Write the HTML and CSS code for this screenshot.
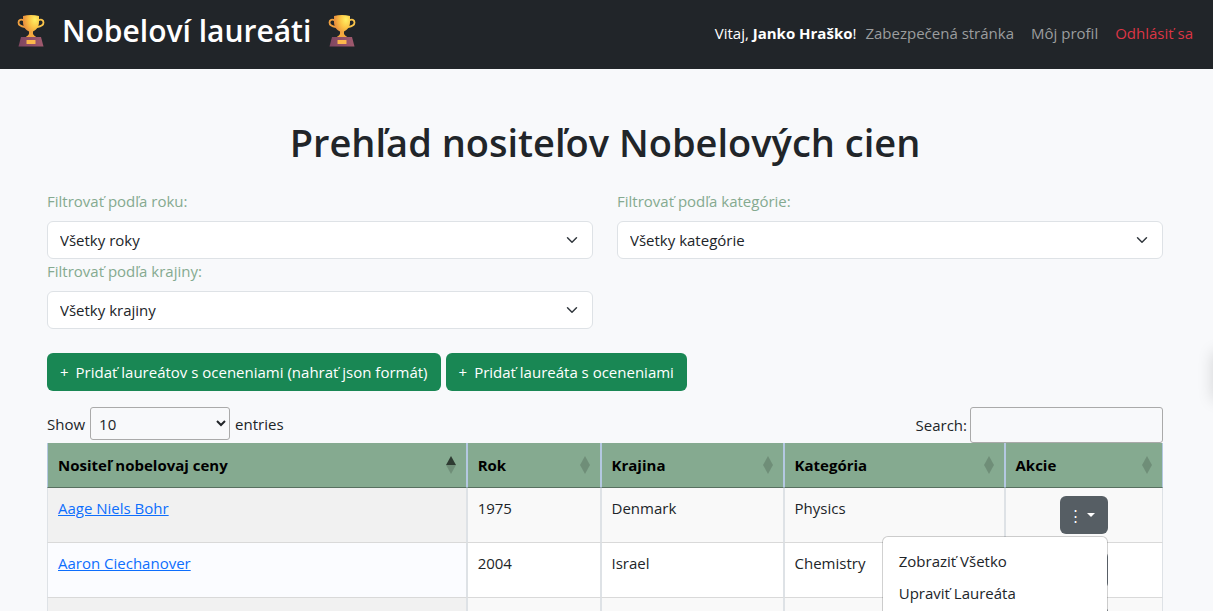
FILE: index.html
```html
<!DOCTYPE html>
<html lang="sk">
<head>
    <meta charset="UTF-8">
    <title>Nobeloví laureáti</title>
    <meta name="viewport" content="width=device-width, initial-scale=1">
    <link rel="stylesheet" href="styles.css">
</head>
<body>
    <svg class="defs" aria-hidden="true">
        <defs>
            <radialGradient id="gold" cx="0.75" cy="0.2" r="0.8">
                <stop offset="0" stop-color="#fff064"/>
                <stop offset="0.45" stop-color="#fcc444"/>
                <stop offset="1" stop-color="#e5853c"/>
            </radialGradient>
            <linearGradient id="base" x1="0" y1="0" x2="1" y2="0">
                <stop offset="0" stop-color="#7f4660"/>
                <stop offset="1" stop-color="#a05a6e"/>
            </linearGradient>
            <symbol id="trophy" viewBox="0 0 28 32">
                <path d="M7 5.500C4 3.800 1.500 4.800 1.500 7.500c0 2.800 2.500 4 6.500 4.500" fill="none" stroke="#efa040" stroke-width="1.800"/>
                <path d="M21 5.500c3-1.700 5.500-.7 5.500 2 0 2.800-2.500 4-6.500 4.500" fill="none" stroke="#fbc54a" stroke-width="1.800"/>
                <path d="M6 1Q14-1 22 1v6c0 4.500-2.500 8-6 9.500v2c0 1 .5 2 2.500 3V23h-9v-1.500c2-1 2.500-2 2.500-3v-2C8.500 15 6 11.500 6 7z" fill="url(#gold)"/>
                <path d="M4 22h20l2.500 9.500h-25z" fill="url(#base)"/>
                <path d="M12.500 17.500c0 2-1.500 3-3.500 4.500h10c-2-1.500-3.500-2.500-3.500-4.500z" fill="#f3a93f"/>
                <rect x="9.500" y="25" width="9" height="4" rx="0.500" fill="#fcb84b"/>
            </symbol>
        </defs>
    </svg>

    <header class="header">
        <div class="brand">
            <svg class="trophy" aria-hidden="true"><use href="#trophy"/></svg>
            <span>Nobeloví laureáti</span>
            <svg class="trophy" aria-hidden="true"><use href="#trophy"/></svg>
        </div>
        <nav class="nav">
            <span class="welcome">Vitaj, <strong>Janko Hraško</strong>!</span>
            <a class="nav-link" href="#">Zabezpečená stránka</a>
            <a class="nav-link" href="#">Môj profil</a>
            <a class="nav-link logout" href="#">Odhlásiť sa</a>
        </nav>
    </header>

    <main class="container">
        <h1>Prehľad nositeľov Nobelových cien</h1>

        <div class="filters">
            <div class="filter">
                <label for="yearFilter">Filtrovať podľa roku:</label>
                <select id="yearFilter" class="form-select">
                    <option>Všetky roky</option>
                </select>
            </div>
            <div class="filter">
                <label for="categoryFilter">Filtrovať podľa kategórie:</label>
                <select id="categoryFilter" class="form-select">
                    <option>Všetky kategórie</option>
                </select>
            </div>
            <div class="filter">
                <label for="countryFilter">Filtrovať podľa krajiny:</label>
                <select id="countryFilter" class="form-select">
                    <option>Všetky krajiny</option>
                </select>
            </div>
        </div>

        <div class="buttons">
            <button type="button" class="btn btn-success"><span>+</span> <span>Pridať laureátov s oceneniami (nahrať json formát)</span></button>
            <button type="button" class="btn btn-success"><span>+</span> <span>Pridať laureáta s oceneniami</span></button>
        </div>

        <div class="table-controls">
            <label class="length">Show
                <select class="length-select">
                    <option>10</option>
                </select>
                entries</label>
            <label class="search">Search:
                <input type="search" class="search-input"></label>
        </div>

        <table class="laureates">
            <colgroup>
                <col class="col-name">
                <col class="col-year">
                <col class="col-country">
                <col class="col-category">
                <col class="col-actions">
            </colgroup>
            <thead>
                <tr>
                    <th><div class="th-inner">Nositeľ nobelovaj ceny<span class="sort asc"></span></div></th>
                    <th><div class="th-inner">Rok<span class="sort"></span></div></th>
                    <th><div class="th-inner">Krajina<span class="sort"></span></div></th>
                    <th><div class="th-inner">Kategória<span class="sort"></span></div></th>
                    <th><div class="th-inner">Akcie<span class="sort"></span></div></th>
                </tr>
            </thead>
            <tbody>
                <tr>
                    <td><a href="#">Aage Niels Bohr</a></td>
                    <td>1975</td>
                    <td>Denmark</td>
                    <td>Physics</td>
                    <td class="actions">
                        <div class="dropdown">
                            <button type="button" class="btn btn-toggle open">⋮</button>
                            <div class="dropdown-menu">
                                <a class="dropdown-item" href="#">Zobraziť Všetko</a>
                                <a class="dropdown-item" href="#">Upraviť Laureáta</a>
                            </div>
                        </div>
                    </td>
                </tr>
                <tr>
                    <td><a href="#">Aaron Ciechanover</a></td>
                    <td>2004</td>
                    <td>Israel</td>
                    <td>Chemistry</td>
                    <td class="actions">
                        <div class="dropdown">
                            <button type="button" class="btn btn-toggle">⋮</button>
                        </div>
                    </td>
                </tr>
                <tr>
                    <td></td>
                    <td></td>
                    <td></td>
                    <td></td>
                    <td class="actions">
                        <div class="dropdown">
                            <button type="button" class="btn btn-toggle"></button>
                        </div>
                    </td>
                </tr>
            </tbody>
        </table>
    </main>

    <div class="side-panel"></div>
</body>
</html>
```
FILE: styles.css
```css
:root {
    --dark: #212529;
    --page: #f8f9fb;
    --green: #85aa90;
    --success: #198754;
    --border: #dee2e6;
    --link: #0d6efd;
}
*, *::before, *::after {
    box-sizing: border-box;
}
body {
    margin: 0;
    background: var(--page);
    color: var(--dark);
    font-family: "Segoe UI", "Open Sans", "Noto Sans", sans-serif;
    font-size: 15px;
    line-height: 24px;
}
button, select, input {
    font: inherit;
    color: inherit;
}
.defs {
    position: absolute;
    width: 0;
    height: 0;
}

/* header */
.header {
    display: flex;
    justify-content: space-between;
    align-items: flex-start;
    background: var(--dark);
    padding: 11px 20px 18px 17px;
}
.brand {
    display: flex;
    align-items: center;
    gap: 17px;
    color: #fff;
    font-size: 30px;
    font-weight: 600;
    line-height: 40px;
}
.trophy {
    width: 28px;
    height: 32px;
}
.nav {
    display: flex;
    gap: 17px;
    padding-top: 10px;
}
.welcome {
    color: #fff;
    margin-right: -8px;
}
.nav-link {
    color: #9b9d9e;
    text-decoration: none;
}
.nav-link.logout {
    color: #dc3545;
}

.container {
    padding: 49px 50px 0 47px;
}
h1 {
    margin: 0 0 23px;
    font-size: 38px;
    font-weight: 600;
    line-height: 48px;
    text-align: center;
}

/* filters */
.filters {
    display: grid;
    grid-template-columns: 1fr 1fr;
    column-gap: 24px;
}
.filter label {
    display: block;
    margin-bottom: 8px;
    color: var(--green);
}
.form-select {
    display: block;
    width: 100%;
    height: 38px;
    padding: 0 36px 0 12px;
    appearance: none;
    border: 1px solid var(--border);
    border-radius: 6px;
    background: #fff url("data:image/svg+xml,%3csvg xmlns='http://www.w3.org/2000/svg' viewBox='0 0 16 16'%3e%3cpath fill='none' stroke='%23343a40' stroke-linecap='round' stroke-linejoin='round' stroke-width='2' d='m2 5 6 6 6-6'/%3e%3c/svg%3e") no-repeat right 14px center;
    background-size: 12px 12px;
}

/* buttons */
.buttons {
    display: flex;
    gap: 5px;
    margin: 24px 0 16px;
}
.btn {
    display: flex;
    align-items: center;
    height: 38px;
    padding: 0 13px;
    border: none;
    border-radius: 6px;
    color: #fff;
    cursor: pointer;
}
.btn-success {
    gap: 7px;
    background: var(--success);
}

/* length and search */
.table-controls {
    display: flex;
    justify-content: space-between;
    align-items: flex-start;
}
.length, .search {
    display: flex;
    align-items: center;
}
.length {
    gap: 5px;
}
.search {
    gap: 3px;
}
.length-select {
    width: 140px;
    height: 33px;
    padding: 4px;
    border: 1px solid #aaa;
    border-radius: 3px;
    background-color: transparent;
}
.search-input {
    width: 193px;
    height: 36px;
    padding: 5px;
    border: 1px solid #aaa;
    border-radius: 3px;
    background: transparent;
}

/* table */
.laureates {
    width: 100%;
    table-layout: fixed;
    border-collapse: separate;
    border-spacing: 0;
}
.col-name { width: 37.6%; }
.col-year { width: 12%; }
.col-country { width: 16.4%; }
.col-category { width: 19.8%; }
.col-actions { width: 14.2%; }

.laureates th {
    padding: 10px;
    background: var(--green);
    color: #000;
    font-weight: 700;
    text-align: left;
    border-left: 1px solid #b4c8e1;
    border-right: 1px solid #b4c8e1;
    border-bottom: 1px solid #587060;
}
.th-inner {
    display: flex;
    justify-content: space-between;
    align-items: center;
}
.sort::before, .sort::after {
    content: "";
    display: block;
    border: 5px solid transparent;
    opacity: 0.16;
}
.sort::before {
    border-top: 0;
    border-bottom: 9px solid #000;
}
.sort::after {
    border-bottom: 0;
    border-top: 9px solid #000;
}
.sort.asc::before {
    opacity: 0.65;
}
.laureates td {
    height: 55px;
    padding: 8px 10px;
    vertical-align: top;
    background: #fff;
    border-left: 1px solid var(--border);
    border-right: 1px solid var(--border);
    border-bottom: 1px solid #d9d9d9;
}
.laureates td:first-child {
    background: #fbfcff;
}
.laureates tbody tr:nth-child(odd) td {
    background: #f9f9f9;
}
.laureates tbody tr:nth-child(odd) td:first-child {
    background: #f1f1f1;
}
.laureates a {
    color: var(--link);
}
.laureates .actions {
    text-align: center;
}

/* row menu */
.dropdown {
    position: relative;
    display: inline-block;
}
.btn-toggle {
    justify-content: flex-end;
    gap: 4px;
    width: 48px;
    padding: 0 13px 0 0;
    background: #6c757d;
}
.btn-toggle::after {
    content: "";
    border: 4px solid transparent;
    border-top-color: #fff;
    border-bottom: 0;
}
.btn-toggle.open {
    background: #565e64;
}
.dropdown-menu {
    position: absolute;
    top: 40px;
    right: 0;
    z-index: 10;
    width: 226px;
    padding: 8px 0;
    text-align: left;
    background: #fff;
    background-clip: padding-box;
    border: 1px solid rgba(0, 0, 0, 0.18);
    border-radius: 6px;
}
.laureates .dropdown-item {
    display: block;
    padding: 4px 16px;
    color: var(--dark);
    text-decoration: none;
}

.side-panel {
    position: fixed;
    top: 352px;
    left: 100%;
    width: 40px;
    height: 48px;
    box-shadow: 0 0 16px rgba(0, 0, 0, 0.15);
}
```
